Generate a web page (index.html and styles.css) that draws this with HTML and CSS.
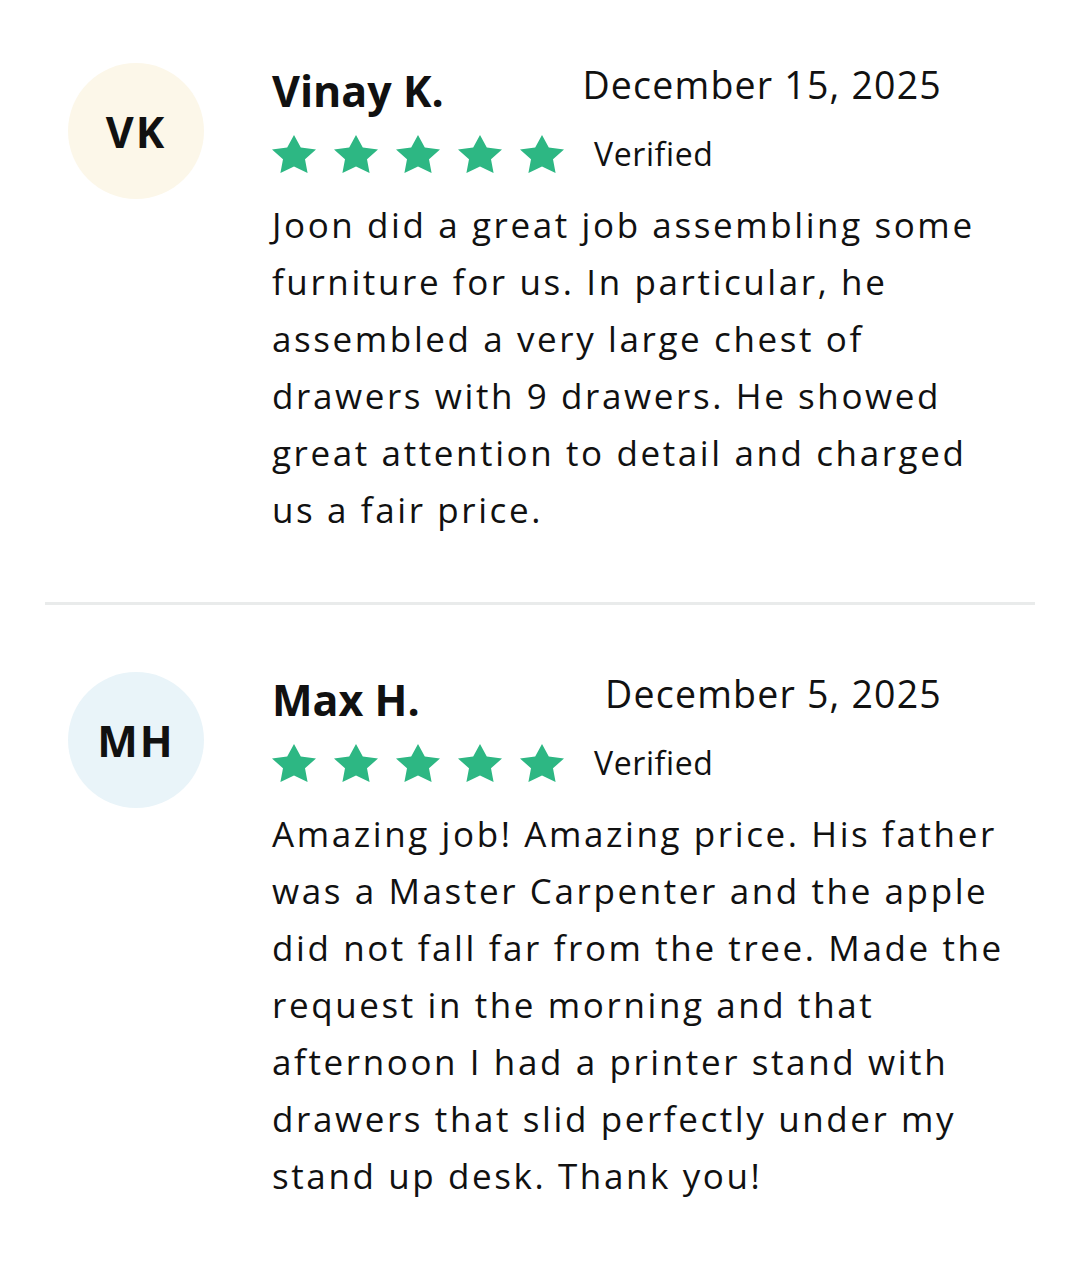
FILE: index.html
```html
<!DOCTYPE html>
<html lang="en">
<head>
  <meta charset="UTF-8">
  <meta name="viewport" content="width=device-width, initial-scale=1.0">
  <title>Reviews</title>

  <link rel="stylesheet" href="styles.css">
</head>

<body>
  <div class="reviews">

    <div class="review">
      <div class="avatar avatar-cream">VK</div>
      <div class="review-main">
        <div class="review-head">
          <div class="name">Vinay K.</div>
          <div class="date">December 15, 2025</div>
        </div>
        <div class="rating">
          <div class="stars">
            <svg class="star" viewBox="2 1.5 20 19" preserveAspectRatio="none"><path d="M12 1.5l3.09 6.26 6.91 1-5 4.87 1.18 6.88L12 17.27l-6.18 3.24 1.18-6.88-5-4.87 6.91-1z"/></svg>
            <svg class="star" viewBox="2 1.5 20 19" preserveAspectRatio="none"><path d="M12 1.5l3.09 6.26 6.91 1-5 4.87 1.18 6.88L12 17.27l-6.18 3.24 1.18-6.88-5-4.87 6.91-1z"/></svg>
            <svg class="star" viewBox="2 1.5 20 19" preserveAspectRatio="none"><path d="M12 1.5l3.09 6.26 6.91 1-5 4.87 1.18 6.88L12 17.27l-6.18 3.24 1.18-6.88-5-4.87 6.91-1z"/></svg>
            <svg class="star" viewBox="2 1.5 20 19" preserveAspectRatio="none"><path d="M12 1.5l3.09 6.26 6.91 1-5 4.87 1.18 6.88L12 17.27l-6.18 3.24 1.18-6.88-5-4.87 6.91-1z"/></svg>
            <svg class="star" viewBox="2 1.5 20 19" preserveAspectRatio="none"><path d="M12 1.5l3.09 6.26 6.91 1-5 4.87 1.18 6.88L12 17.27l-6.18 3.24 1.18-6.88-5-4.87 6.91-1z"/></svg>
          </div>
          <span class="verified">Verified</span>
        </div>
        <p class="text">Joon did a great job assembling some furniture for us. In particular, he assembled a very large chest of drawers with 9 drawers. He showed great attention to detail and charged us a fair price.</p>
      </div>
    </div>

    <div class="review">
      <div class="avatar avatar-blue">MH</div>
      <div class="review-main">
        <div class="review-head">
          <div class="name">Max H.</div>
          <div class="date">December 5, 2025</div>
        </div>
        <div class="rating">
          <div class="stars">
            <svg class="star" viewBox="2 1.5 20 19" preserveAspectRatio="none"><path d="M12 1.5l3.09 6.26 6.91 1-5 4.87 1.18 6.88L12 17.27l-6.18 3.24 1.18-6.88-5-4.87 6.91-1z"/></svg>
            <svg class="star" viewBox="2 1.5 20 19" preserveAspectRatio="none"><path d="M12 1.5l3.09 6.26 6.91 1-5 4.87 1.18 6.88L12 17.27l-6.18 3.24 1.18-6.88-5-4.87 6.91-1z"/></svg>
            <svg class="star" viewBox="2 1.5 20 19" preserveAspectRatio="none"><path d="M12 1.5l3.09 6.26 6.91 1-5 4.87 1.18 6.88L12 17.27l-6.18 3.24 1.18-6.88-5-4.87 6.91-1z"/></svg>
            <svg class="star" viewBox="2 1.5 20 19" preserveAspectRatio="none"><path d="M12 1.5l3.09 6.26 6.91 1-5 4.87 1.18 6.88L12 17.27l-6.18 3.24 1.18-6.88-5-4.87 6.91-1z"/></svg>
            <svg class="star" viewBox="2 1.5 20 19" preserveAspectRatio="none"><path d="M12 1.5l3.09 6.26 6.91 1-5 4.87 1.18 6.88L12 17.27l-6.18 3.24 1.18-6.88-5-4.87 6.91-1z"/></svg>
          </div>
          <span class="verified">Verified</span>
        </div>
        <p class="text">Amazing job! Amazing price. His father was a Master Carpenter and the apple did not fall far from the tree. Made the request in the morning and that afternoon I had a printer stand with drawers that slid perfectly under my stand up desk. Thank you!</p>
      </div>
    </div>

  </div>
</body>
</html>
```

FILE: styles.css
```css
body {
  margin: 0;
  background: #fff;
  color: #111;
  font-family: "Open Sans", "Noto Sans", sans-serif;
}

.reviews {
  padding: 0 45px;
}

.review {
  display: flex;
  gap: 68px;
  padding: 63px 0 64px 23px;
}

.review + .review {
  border-top: 3px solid #e9ebeb;
  padding-top: 67px;
}

.avatar {
  flex: none;
  width: 136px;
  height: 136px;
  border-radius: 50%;
  display: flex;
  align-items: center;
  justify-content: center;
  font-size: 43px;
  font-weight: 700;
  letter-spacing: 2px;
  color: #111;
}

.avatar-cream {
  background-color: #fcf7e9;
}

.avatar-blue {
  background-color: #e9f4f9;
}

.review-main {
  width: 738px;
}

.review-head {
  width: 670px;
  display: flex;
  justify-content: space-between;
  align-items: flex-start;
}

.name {
  font-size: 43px;
  font-weight: 700;
  line-height: 55px;
}

.date {
  font-size: 37.5px;
  line-height: 43px;
  letter-spacing: 1.2px;
}

.rating {
  display: flex;
  align-items: center;
  gap: 30px;
  margin-top: 16px;
}

.stars {
  display: flex;
  gap: 18px;
}

.star {
  width: 44px;
  height: 38px;
  fill: #2db783;
  display: block;
}

.verified {
  font-size: 32px;
  line-height: 40px;
  letter-spacing: 0.6px;
}

.text {
  margin: 22px 0 0;
  font-size: 35px;
  line-height: 57px;
  letter-spacing: 2.6px;
}
```
